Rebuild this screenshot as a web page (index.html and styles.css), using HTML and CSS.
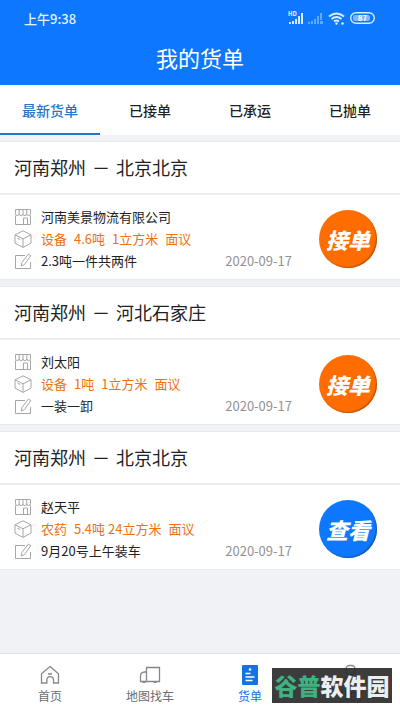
FILE: index.html
```
<!DOCTYPE html>
<html lang="zh-CN">
<head>
<meta charset="utf-8">
<meta name="viewport" content="width=device-width, initial-scale=1">
<title>我的货单</title>
<link rel="stylesheet" href="styles.css">
</head>
<body>
<svg class="defs" aria-hidden="true">
  <symbol id="shop" viewBox="0 0 18 18">
    <path d="M1.500 1.500h15v4.200a1.800 1.800 0 0 1-3.700 0 1.900 1.900 0 0 1-3.800 0 1.900 1.900 0 0 1-3.800 0 1.800 1.800 0 0 1-3.700 0zM5.200 1.500v4.200M9 1.500v4.200M12.800 1.500v4.200M1.500 7.500v9h15v-9M9.500 16.500v-6.500h4v6.500"/>
  </symbol>
  <symbol id="box" viewBox="0 0 18 18">
    <path d="M9 .8l8 4v8.400l-8 4.200-8-4.200V4.800zM1 4.800l8 4 8-4M9 8.800v8.600M3.500 8.200l2.800 1.400"/>
  </symbol>
  <symbol id="edit" viewBox="0 0 18 18">
    <path d="M11 3.500H1.500v13h15V10M14.500 2l2.300 1.700-6.300 8.800-3.200 1.600.6-3.600z"/>
  </symbol>
</svg>
<div class="app">
  <header class="top">
    <div class="status">
      <span class="time">上午9:38</span>
      <svg class="signals" width="90" height="18" viewBox="0 0 90 18" aria-hidden="true">
        <text class="hd" x="1" y="7">HD</text>
        <path class="on" d="M2 13h2v2H2zM5 12h2v3H5zM8 10h2v5H8zM11 7h2v8h-2zM14 4h2v11h-2z"/>
        <path class="dim" d="M21 13h2v2h-2zM24 12h2v3h-2zM27 10h2v5h-2zM30 7h2v8h-2zM33 4h2v7h-2zM33 12h3v3h-3z"/>
        <path class="wave" d="M42 7.500q7.500-6 15 0M44.500 10q5-4 10 0M47 12.500q2.500-2 5 0"/>
        <circle class="on" cx="49.500" cy="14.500" r="1.200"/>
        <circle class="on" cx="55.500" cy="14.500" r="1.300"/>
        <rect class="shell" x="63.700" y="3.700" width="23.600" height="10.600" rx="5.300"/>
        <rect class="level" x="66" y="6" width="17" height="6" rx="2"/>
        <text class="pct" x="75.500" y="12">87</text>
      </svg>
    </div>
    <h1>我的货单</h1>
  </header>
  <nav class="tabs">
    <a class="tab current" href="#new">最新货单</a>
    <a class="tab" href="#taken">已接单</a>
    <a class="tab" href="#carried">已承运</a>
    <a class="tab" href="#dropped">已抛单</a>
  </nav>
  <main>
    <article class="card">
      <h2>河南郑州<span>－</span>北京北京</h2>
      <div class="body">
        <div class="info">
          <p><svg class="icon"><use href="#shop"/></svg>河南美景物流有限公司</p>
          <p class="goods"><svg class="icon"><use href="#box"/></svg><span>设备</span><span>4.6吨</span><span>1立方米</span><span>面议</span></p>
          <p><svg class="icon"><use href="#edit"/></svg>2.3吨一件共两件<time>2020-09-17</time></p>
        </div>
        <button class="round" type="button">接单</button>
      </div>
    </article>
    <article class="card">
      <h2>河南郑州<span>－</span>河北石家庄</h2>
      <div class="body">
        <div class="info">
          <p><svg class="icon"><use href="#shop"/></svg>刘太阳</p>
          <p class="goods"><svg class="icon"><use href="#box"/></svg><span>设备</span><span>1吨</span><span>1立方米</span><span>面议</span></p>
          <p><svg class="icon"><use href="#edit"/></svg>一装一卸<time>2020-09-17</time></p>
        </div>
        <button class="round" type="button">接单</button>
      </div>
    </article>
    <article class="card">
      <h2>河南郑州<span>－</span>北京北京</h2>
      <div class="body">
        <div class="info">
          <p><svg class="icon"><use href="#shop"/></svg>赵天平</p>
          <p class="goods"><svg class="icon"><use href="#box"/></svg><span>农药</span><span>5.4吨 24立方米</span><span>面议</span></p>
          <p><svg class="icon"><use href="#edit"/></svg>9月20号上午装车<time>2020-09-17</time></p>
        </div>
        <button class="round view" type="button">查看</button>
      </div>
    </article>
  </main>
  <nav class="bottom">
    <a href="#home">
      <svg width="22" height="22" viewBox="0 0 22 22"><path d="M11 2.500l8.500 7.200V19h-5v-3a3.300 3.300 0 0 0-6.600 0v3H2.500V9.700zM9 10h4"/></svg>
      首页</a>
    <a href="#map">
      <svg width="22" height="22" viewBox="0 0 22 22"><path d="M7.500 3.500h13v14h-13zM7.500 8H5.500Q1.500 8.500 1.500 12v5.500h6"/><path class="wheel" d="M3.500 17.500h3v1.500h-3zM14.500 17.500h3v1.500h-3z"/></svg>
      地图找车</a>
    <a class="current" href="#orders">
      <svg width="22" height="22" viewBox="0 0 22 22"><rect class="sheet" x="3" y="1" width="16" height="20" rx="1"/><circle class="dot" cx="11" cy="5.500" r="1.300"/><path class="lines" d="M6.500 9.500h5M6.500 13h9M6.500 16.500h7"/></svg>
      货单</a>
    <a href="#me">
      <svg width="22" height="22" viewBox="0 0 22 22"><rect x="7" y="1.500" width="9" height="9" rx="3.500"/><path d="M3 20q0-7 8-7t8 7z"/></svg>
      我的</a>
    <div class="mark"><span class="green">谷普</span>软件园</div>
  </nav>
</div>
</body>
</html>
```

FILE: styles.css
```
* { box-sizing: border-box; }
body, h1, h2, p { margin: 0; }
body {
  background: #f1f2f6;
  color: #222;
  font-family: "Noto Sans CJK SC", "Noto Sans", sans-serif;
  font-size: 13px;
}
a { color: inherit; text-decoration: none; }
.defs { position: absolute; width: 0; height: 0; }
.app { display: flex; flex-direction: column; min-height: 100vh; }

.top { background: #0d78fe; color: #fff; }
.status {
  display: flex;
  align-items: center;
  justify-content: space-between;
  height: 36px;
  padding: 0 23px 0 24px;
}
.time { font-size: 13px; font-weight: 500; color: #e6f2ff; }
.on { fill: #d9ebff; }
.dim { fill: #61a8ff; }
.wave { fill: none; stroke: #d9ebff; stroke-width: 2; }
.shell { fill: none; stroke: #d9ebff; stroke-width: 1.4; }
.level { fill: #7cb8ff; }
.hd { fill: #e6f2ff; font-size: 6px; font-weight: 700; }
.pct { fill: #fff; font-size: 8px; font-weight: 700; text-anchor: middle; }
h1 {
  height: 49px;
  font-size: 22px;
  font-weight: 400;
  line-height: 42px;
  text-align: center;
}

.tabs { display: flex; background: #fff; }
.tab {
  flex: 1;
  height: 50px;
  border-bottom: 2px solid transparent;
  font-size: 14px;
  font-weight: 500;
  line-height: 50px;
  text-align: center;
}
.tab.current { border-color: #2376c9; color: #2376c9; }

main {
  display: flex;
  flex: 1;
  flex-direction: column;
  gap: 8px;
  padding: 7px 0;
}
.card { background: #fff; box-shadow: 0 0 1px 1px #e9eaee; }
h2 {
  padding: 0 14px;
  border-bottom: 2px solid #ededf0;
  font-size: 18px;
  font-weight: 400;
  line-height: 51px;
}
h2 span { margin: 0 6px; }
.body {
  display: flex;
  align-items: center;
  gap: 27px;
  padding: 11px 23px 7px 14px;
}
.info { flex: 1; }
.info p { display: flex; align-items: center; line-height: 22px; }
.icon {
  width: 18px;
  height: 18px;
  margin-right: 9px;
  fill: none;
  stroke: #a6a6a6;
}
.goods { color: #f0700f; }
.goods span { margin-right: 7px; }
time { margin-left: auto; color: #929292; }
.round {
  width: 58px;
  height: 58px;
  padding: 0;
  border: 0;
  border-radius: 50%;
  background: #ff6c00;
  box-shadow: inset -1px -1px 1px #b65312;
  color: #fff;
  font-family: inherit;
  font-size: 22px;
  font-style: italic;
  font-weight: 900;
}
.round.view { background: #0d78fe; box-shadow: inset -1px -1px 1px #1756a6; }

.bottom {
  position: relative;
  display: flex;
  height: 58px;
  border-top: 1px solid #e3e3e6;
  background: #fff;
}
.bottom a {
  display: flex;
  flex: 1;
  flex-direction: column;
  align-items: center;
  gap: 1px;
  padding-top: 10px;
  color: #6b6d70;
  font-size: 12px;
  line-height: 18px;
}
.bottom svg { fill: none; stroke: #85878d; stroke-width: 1.3; }
.bottom a.current { color: #1473e0; }
.bottom .sheet { fill: #1473e0; stroke: none; }
.bottom .dot { fill: #fff; stroke: none; }
.bottom .lines { stroke: #fff; stroke-width: 1.6; }
.bottom .wheel { fill: #85878d; stroke: none; }
.mark {
  position: absolute;
  right: 8px;
  bottom: 8px;
  width: 120px;
  height: 35px;
  background: rgba(43, 43, 43, .92);
  color: #eee;
  font-size: 23px;
  font-weight: 900;
  line-height: 34px;
  text-align: center;
}
.green { color: #3fb183; }
```
